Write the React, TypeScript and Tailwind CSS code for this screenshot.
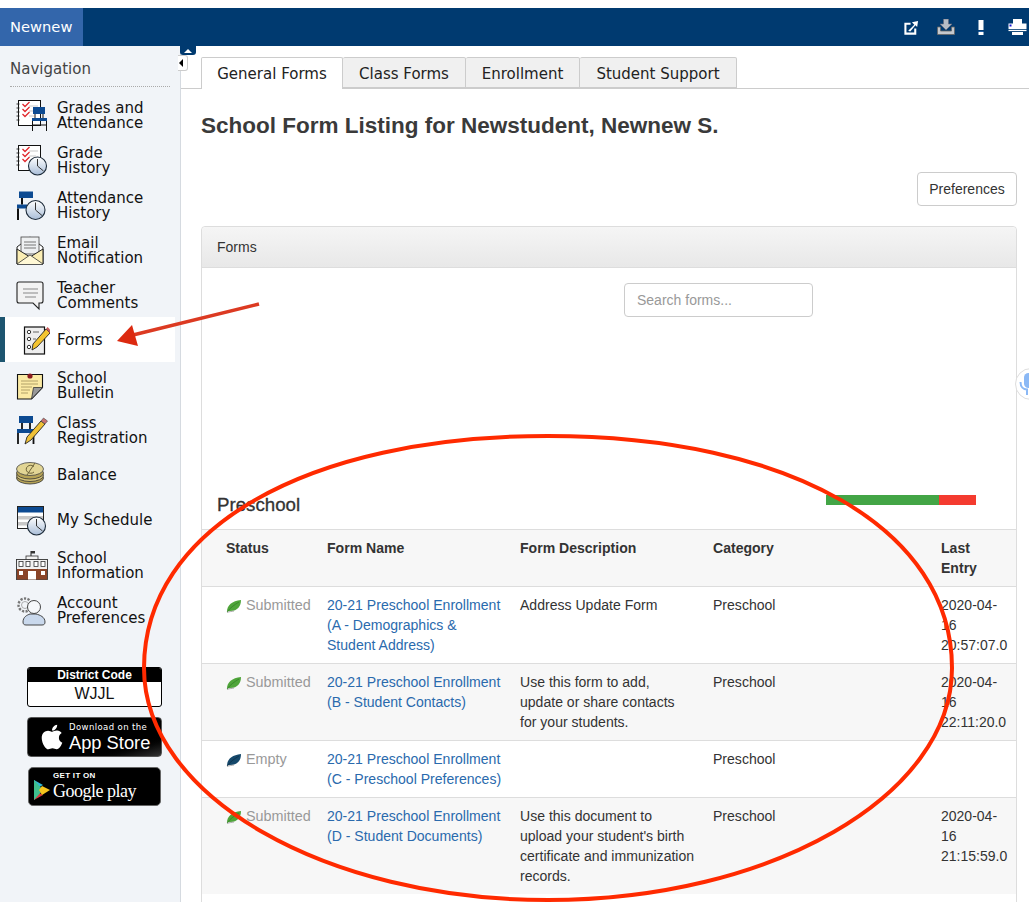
import { ReactNode } from "react";
import { FaApple } from "react-icons/fa";

const Clock = ({ x, y, r = 7.5 }: { x: number; y: number; r?: number }) => (
  <g>
    <defs>
      <linearGradient id="clockFill" x1="0" y1="0" x2="0" y2="1">
        <stop offset="0" stopColor="#ffffff" />
        <stop offset="1" stopColor="#a9bdd8" />
      </linearGradient>
    </defs>
    <circle cx={x} cy={y} r={r} fill="url(#clockFill)" stroke="#1d2b3a" strokeWidth="1.1" />
    <path d={`M${x} ${y - r + 2}V${y}L${x + r - 3} ${y + r - 4}`} fill="none" stroke="#333" strokeWidth="1" />
  </g>
);

const Notebook = () => (
  <g>
    <rect x="2.500" y="1.500" width="22" height="25" fill="#fff" stroke="#111" strokeWidth="1" />
    <path d="M0.500 5h3M0.500 9h3M0.500 13h3M0.500 17h3M0.500 21h3" stroke="#222" strokeWidth="0.9" />
    <path d="M13 7h9M13 12h7M13 17h5" stroke="#bbb" strokeWidth="0.8" />
    {[5, 10, 15].map((y) => (
      <path key={y} d={`M6.500 ${y}l2.500 2.500 4.500-4.500`} fill="none" stroke="#e0262b" strokeWidth="1.300" />
    ))}
  </g>
);

const GradesIcon = () => (
  <>
    <Notebook />
    <rect x="17" y="8" width="12" height="7" fill="#0c4a92" />
    <rect x="16" y="19" width="15" height="3" fill="#0c4a92" />
    <path d="M19 15v4M27 15v4M16.500 22v10M30.500 22v10M17 26h13" fill="none" stroke="#111" strokeWidth="1" />
  </>
);

const GradeHistoryIcon = () => (
  <>
    <Notebook />
    <Clock x={21.500} y={22} r={9} />
  </>
);

const AttendanceIcon = () => (
  <>
    <rect x="3" y="2.500" width="14" height="6.500" fill="#0c4a92" />
    <rect x="1" y="15.500" width="10" height="4" fill="#0c4a92" />
    <path d="M2 19.500v11.500" stroke="#111" strokeWidth="2" />
    <path d="M6 9v6.500" stroke="#111" strokeWidth="2" />
    <Clock x={19.500} y={21} r={9.500} />
  </>
);

const EmailIcon = () => (
  <>
    <path d="M1 13L14 3h0l13 10v17H1z" fill="#fff" stroke="#222" strokeWidth="1" />
    <rect x="5" y="3" width="18" height="17" fill="#eef0f2" stroke="#444" strokeWidth="0.8" />
    <path d="M8 8h12M8 11h12M8 14h12" stroke="#777" strokeWidth="1" />
    <path d="M1 15l13 8 13-8v15H1z" fill="#fbeeb4" stroke="#222" strokeWidth="1" />
    <path d="M1 30l13-9 13 9" fill="#fff8d6" stroke="#333" strokeWidth="0.8" />
  </>
);

const CommentIcon = () => (
  <>
    <path d="M3 3h22a2 2 0 0 1 2 2v17a2 2 0 0 1-2 2h-2v6l-6-6H3a2 2 0 0 1-2-2V5a2 2 0 0 1 2-2z" fill="#f2f2f2" stroke="#222" strokeWidth="1.100" />
    <path d="M7 10h15M7 14h15M9 18h11" stroke="#888" strokeWidth="1" />
  </>
);

const FormsIcon = () => (
  <>
    <rect x="8.500" y="3" width="20" height="27" fill="#eee" stroke="#111" strokeWidth="1.200" />
    <circle cx="13" cy="8" r="1.700" fill="#fff" stroke="#333" />
    <circle cx="13" cy="15" r="1.700" fill="#fff" stroke="#333" />
    <circle cx="13" cy="23" r="1.700" fill="#fff" stroke="#333" />
    <path d="M17 8h6M17 15h3" stroke="#666" strokeWidth="1.200" />
    <path d="M16 26l1-6 13-15 4 4-13 14z" fill="#f4c430" stroke="#222" strokeWidth="0.9" />
    <path d="M30 5l1.500-2 3 3-.5 3z" fill="#c65b5b" />
  </>
);

const BulletinIcon = () => (
  <>
    <path d="M1.500 5.500h25v13l-11 11.500h-14z" fill="#fbeaa4" stroke="#111" strokeWidth="1.100" />
    <path d="M15.500 30l2-11.500h9z" fill="#999" stroke="#333" strokeWidth="0.8" />
    <circle cx="14" cy="7" r="2.600" fill="#8a1c22" />
    <path d="M5 12h17M5 15h17M5 18h11M5 21h9M5 24h7" stroke="#a89a63" strokeWidth="0.9" />
  </>
);

const RegistrationIcon = () => (
  <>
    <rect x="3" y="2" width="14" height="7" fill="#0c4a92" />
    <rect x="1" y="15" width="17" height="4" fill="#0c4a92" />
    <path d="M2 19v11M17.500 19v11M6 9v6M14 9v6" stroke="#111" strokeWidth="1.800" />
    <path d="M9 30l2-7 14-16 4 3-14 16z" fill="#f0c136" stroke="#222" strokeWidth="0.9" />
    <path d="M25 7l2.500-3 4 3-2.500 3z" fill="#c87070" stroke="#444" strokeWidth="0.6" />
  </>
);

const BalanceIcon = () => (
  <>
    <ellipse cx="14" cy="19" rx="13.500" ry="6" fill="#b5a256" stroke="#333" strokeWidth="0.8" />
    <ellipse cx="14" cy="16.500" rx="13.500" ry="6" fill="#d8c578" stroke="#333" strokeWidth="0.8" />
    <ellipse cx="14" cy="14" rx="13.500" ry="6" fill="#b5a256" stroke="#333" strokeWidth="0.8" />
    <ellipse cx="14" cy="10" rx="13.500" ry="6.500" fill="#e2d594" stroke="#444" strokeWidth="0.8" />
    <path d="M18 7.500a4.500 4 0 1 0 0 5.500M19 4l-8 12" fill="none" stroke="#6c6238" strokeWidth="1" />
  </>
);

const ScheduleIcon = () => (
  <>
    <rect x="1.500" y="2.500" width="26" height="22" fill="#fff" stroke="#222" strokeWidth="1" />
    <rect x="2" y="3" width="25" height="5.500" fill="#0c4a92" />
    <rect x="2" y="12" width="25" height="3.500" fill="#c8c8c8" />
    <rect x="2" y="18" width="25" height="3.500" fill="#c8c8c8" />
    <Clock x={20.500} y={22} r={9} />
  </>
);

const SchoolIcon = () => (
  <>
    <path d="M15 2v5" stroke="#222" strokeWidth="1" />
    <rect x="15" y="2" width="4" height="2.500" fill="#333" />
    <rect x="10" y="7" width="12" height="5" fill="#f2f2f2" stroke="#333" strokeWidth="0.8" />
    <rect x="0.500" y="10.500" width="31" height="20" fill="#f2f2f2" stroke="#333" strokeWidth="0.9" />
    <rect x="1" y="20" width="30" height="10.500" fill="#8a4428" />
    <rect x="3" y="12.500" width="4" height="5" fill="#fff" stroke="#333" strokeWidth="0.8" />
    <rect x="10" y="12.500" width="4" height="5" fill="#fff" stroke="#333" strokeWidth="0.8" />
    <rect x="18" y="12.500" width="4" height="5" fill="#fff" stroke="#333" strokeWidth="0.8" />
    <rect x="25" y="12.500" width="4" height="5" fill="#fff" stroke="#333" strokeWidth="0.8" />
    <rect x="3" y="22" width="4" height="4" fill="#fff" />
    <rect x="25" y="22" width="4" height="4" fill="#fff" />
    <rect x="12" y="22" width="8" height="8.500" fill="#fff" />
  </>
);

const AccountIcon = () => (
  <>
    <circle cx="9" cy="11" r="6.500" fill="none" stroke="#777" strokeWidth="2.400" strokeDasharray="2.200 1.400" />
    <circle cx="9" cy="11" r="3.500" fill="#f1f4f8" stroke="#999" strokeWidth="0.8" />
    <path d="M10 31c-2 0-3-1-3-3 0-5 4-7 7-8h6c4 1 9 3 9 8 0 2-1 3-3 3z" fill="#c9d8ec" stroke="#333" strokeWidth="0.9" />
    <circle cx="18" cy="13" r="6.500" fill="#f6f8fb" stroke="#333" strokeWidth="0.9" />
  </>
);

const navItems: { label: ReactNode; icon: ReactNode; active?: boolean }[] = [
  { label: <>Grades and<br />Attendance</>, icon: <GradesIcon /> },
  { label: <>Grade<br />History</>, icon: <GradeHistoryIcon /> },
  { label: <>Attendance<br />History</>, icon: <AttendanceIcon /> },
  { label: <>Email<br />Notification</>, icon: <EmailIcon /> },
  { label: <>Teacher<br />Comments</>, icon: <CommentIcon /> },
  { label: "Forms", icon: <FormsIcon />, active: true },
  { label: <>School<br />Bulletin</>, icon: <BulletinIcon /> },
  { label: <>Class<br />Registration</>, icon: <RegistrationIcon /> },
  { label: "Balance", icon: <BalanceIcon /> },
  { label: "My Schedule", icon: <ScheduleIcon /> },
  { label: <>School<br />Information</>, icon: <SchoolIcon /> },
  { label: <>Account<br />Preferences</>, icon: <AccountIcon /> },
];

const tabs = [
  { label: "General Forms", width: "w-[142px]" },
  { label: "Class Forms", width: "w-[123px]" },
  { label: "Enrollment", width: "w-[114px]" },
  { label: "Student Support", width: "w-[157px]" },
];

const rows = [
  {
    status: "Submitted",
    name: <>20-21 Preschool Enrollment<br />(A - Demographics &amp;<br />Student Address)</>,
    desc: "Address Update Form",
    entry: "2020-04-16 20:57:07.0",
  },
  {
    status: "Submitted",
    name: <>20-21 Preschool Enrollment<br />(B - Student Contacts)</>,
    desc: <>Use this form to add,<br />update or share contacts<br />for your students.</>,
    entry: "2020-04-16 22:11:20.0",
  },
  {
    status: "Empty",
    name: <>20-21 Preschool Enrollment<br />(C - Preschool Preferences)</>,
    desc: "",
    entry: "",
  },
  {
    status: "Submitted",
    name: <>20-21 Preschool Enrollment<br />(D - Student Documents)</>,
    desc: <>Use this document to<br />upload your student's birth<br />certificate and immunization<br />records.</>,
    entry: "2020-04-16 21:15:59.0",
  },
];

const Leaf = ({ empty }: { empty: boolean }) => (
  <svg viewBox="0 0 16 14" className="w-4 h-[14px] shrink-0 mt-[4px]">
    <path d="M1 13C1 6 6 2 15 1c0 6-3 11-11 11-1 0-2 0-3 1z" fill={empty ? "#15486b" : "#4fa53a"} />
    <path d="M1 13C4 9 8 6 13 3" fill="none" stroke={empty ? "#0b2c44" : "#2f7d25"} strokeWidth="0.7" />
    <path d="M1 13.500c2-1 5-1 7-1.500" fill="none" stroke="#888" strokeWidth="0.7" />
  </svg>
);

const HeaderIcons = () => (
  <div className="flex items-center ml-auto">
    <svg viewBox="0 0 16 16" className="w-[15px] h-[15px] mr-[18px]">
      <path d="M7 4H1.500v10.500H12V9" fill="none" stroke="#fff" strokeWidth="2.200" />
      <path d="M4.500 11.500L11 5 8.500 2.500 15 1l-1 6.500-1.800-1.800-5.500 6.500z" fill="#fff" />
    </svg>
    <svg viewBox="0 0 18 16" className="w-[18px] h-4 mr-[23px]">
      <path d="M6.500 0h5v5H15l-6 6-6-6h3.500z" fill="#b5bcc6" stroke="#667" strokeWidth="0.6" />
      <path d="M0.500 8v7.500h17V8h-3v4h-11V8z" fill="#c4c8ce" stroke="#666" strokeWidth="0.8" />
    </svg>
    <svg viewBox="0 0 6 15" className="w-[6px] h-[15px] mr-[24px]">
      <rect x="0.500" width="5" height="10" fill="#fff" />
      <rect x="0.500" y="11" width="5" height="1" fill="#1f5fa8" />
      <rect x="0.500" y="12" width="5" height="3" fill="#fff" />
    </svg>
    <svg viewBox="0 0 19 16" className="w-[19px] h-4 mr-[2px]">
      <rect x="5" y="0" width="9" height="5" fill="#fff" />
      <path d="M0.500 4.500h18V10H0.500z" fill="#fff" />
      <rect x="1.500" y="5.500" width="2" height="2" fill="#1414d8" />
      <rect x="0.500" y="10.800" width="18" height="1.300" fill="#fff" />
      <rect x="4" y="13" width="11" height="3" fill="#fff" />
    </svg>
  </div>
);

const Sidebar = () => (
  <aside className="w-[181px] shrink-0 bg-[#f1f4f8] border-r border-[#d5dae0] font-['DejaVu_Sans',sans-serif]">
    <div className="mx-[10px] h-[41px] pt-[14px] border-b border-dotted border-[#aaaaaa] text-[15px] leading-[18px] text-[#444444]">
      Navigation
    </div>
    <nav className="mt-[5px]">
      {navItems.map((item, i) => (
        <div
          key={i}
          className={
            item.active
              ? "h-[45px] w-[175px] flex items-center pl-[11px] gap-[7px] bg-white border-l-[5px] border-[#1d5570]"
              : "h-[45px] flex items-center pl-[16px] gap-[7px]"
          }
        >
          <svg viewBox="0 0 34 32" className="w-[34px] h-8 shrink-0">
            {item.icon}
          </svg>
          <span className="block pt-[2px] text-[15px] leading-[15px] text-[#111111]">{item.label}</span>
        </div>
      ))}
    </nav>
    <div className="ml-[27px] mt-[35px] w-[135px] flex flex-col font-['Liberation_Sans',sans-serif]">
      <div className="h-10 rounded-[3px] border border-black bg-white overflow-hidden">
        <div className="h-[14px] bg-black text-white text-[12px] leading-[14px] font-bold text-center">District Code</div>
        <div className="text-[16px] leading-[24px] text-center text-[#111111]">WJJL</div>
      </div>
      <div className="mt-[10px] h-10 rounded-[4px] bg-gradient-to-br from-black from-70% to-[#333333] border border-[#555555] flex items-center text-white overflow-hidden">
        <FaApple className="w-[28px] h-[28px] ml-[10px] mr-[3px] shrink-0" />
        <div>
          <div className="text-[8.500px] leading-[10px] tracking-[0.4px] font-['DejaVu_Sans',sans-serif] whitespace-nowrap">Download on the</div>
          <div className="text-[18.300px] leading-[21px] whitespace-nowrap">App Store</div>
        </div>
      </div>
      <div className="mt-[10px] ml-[1px] w-[133px] h-[39px] rounded-[5px] bg-black border border-[#666666] flex items-center text-white">
        <svg viewBox="0 0 18 22" className="w-[18px] h-[22px] ml-[4px] mt-[6px] shrink-0">
          <path d="M1 1v10h0l9-5z" fill="#31b7d6" />
          <path d="M1 21V11l9 5z" fill="#d73b3f" />
          <path d="M1 1l9 10-9 10z" fill="#3fbf8e" />
          <path d="M9 7l8 4-8 5-3-5z" fill="#f6c51e" />
        </svg>
        <div className="ml-[2px]">
          <div className="text-[8px] leading-[10px] tracking-[0.3px] font-bold">GET IT ON</div>
          <div className="text-[18px] leading-[21px] whitespace-nowrap tracking-[-0.5px] font-['Liberation_Serif',serif]">Google play</div>
        </div>
      </div>
    </div>
  </aside>
);

const FormsTable = () => (
  <table className="w-full table-fixed border-collapse text-[14.050px] leading-5 text-[#333333]">
    <colgroup>
      <col className="w-[117px]" />
      <col className="w-[193px]" />
      <col className="w-[193px]" />
      <col className="w-[228px]" />
      <col />
    </colgroup>
    <thead>
      <tr className="bg-[#f7f7f7] border-t border-[#dddddd]">
        <th className="pl-6 pr-2 py-2 text-left align-top font-bold">Status</th>
        <th className="px-2 py-2 text-left align-top font-bold">Form Name</th>
        <th className="px-2 py-2 text-left align-top font-bold">Form Description</th>
        <th className="px-2 py-2 text-left align-top font-bold">Category</th>
        <th className="px-2 py-2 text-left align-top font-bold">Last Entry</th>
      </tr>
    </thead>
    <tbody>
      {rows.map((row, i) => (
        <tr key={i} className={i % 2 === 0 ? "border-t border-[#dddddd] bg-white" : "border-t border-[#dddddd] bg-[#f7f7f7]"}>
          <td className="pl-6 pr-0 py-2 align-top">
            <div className="flex gap-[4px] text-[14.400px] text-[#999999]">
              <Leaf empty={row.status === "Empty"} />
              <span>{row.status}</span>
            </div>
          </td>
          <td className="px-2 py-2 align-top text-[#2a6aad]">{row.name}</td>
          <td className="px-2 py-2 align-top whitespace-nowrap">{row.desc}</td>
          <td className="px-2 py-2 align-top">Preschool</td>
          <td className="px-2 py-2 align-top text-[14px] break-words">{row.entry}</td>
        </tr>
      ))}
    </tbody>
  </table>
);

export default function App() {
  return (
    <div className="relative w-[1029px] h-[902px] overflow-hidden bg-white font-['Liberation_Sans',sans-serif]">
      <div className="h-2" />
      <header className="h-[38px] bg-[#003a70] flex items-center">
        <div className="w-[83px] h-full bg-[#3366ab] text-white font-['DejaVu_Sans',sans-serif] text-[14.700px] leading-[38px] pl-[10px]">
          Newnew
        </div>
        <HeaderIcons />
      </header>

      <div className="flex h-[856px]">
        <Sidebar />
        <main className="flex-1 min-w-0">
          <div className="h-[43px] pt-[11px] pl-[20px] flex border-b border-[#cccccc] font-['DejaVu_Sans',sans-serif] text-[15px] text-[#222222]">
            {tabs.map((tab, i) => (
              <div
                key={tab.label}
                className={
                  i === 0
                    ? `h-[32px] ${tab.width} text-center leading-[33px] bg-white border border-b-0 border-[#cccccc] rounded-t-[2px] whitespace-nowrap`
                    : `h-[31px] ${tab.width} text-center leading-[32px] bg-[#f0f0f0] border border-l-0 border-[#cccccc] rounded-t-[2px] whitespace-nowrap`
                }
              >
                {tab.label}
              </div>
            ))}
          </div>

          <div className="pl-[20px] pr-[12px]">
            <h1 className="mt-[24px] text-[22.500px] leading-[26px] font-bold text-[#3a3a3a] whitespace-nowrap">
              School Form Listing for Newstudent, Newnew S.
            </h1>
            <div className="mt-[33px] flex justify-end">
              <button className="w-[100px] h-[34px] bg-white border border-[#cccccc] rounded-[4px] text-[14px] text-[#333333]">
                Preferences
              </button>
            </div>

            <section className="mt-[20px] border border-[#dddddd] rounded-t-[4px] h-[700px]">
              <div className="h-[41px] px-[15px] leading-[41px] text-[14px] text-[#333333] border-b border-[#dddddd] bg-gradient-to-b from-[#f5f5f5] to-[#e8e8e8] rounded-t-[4px]">
                Forms
              </div>
              <div className="pt-[15px] pl-[422px]">
                <input
                  placeholder="Search forms..."
                  className="w-[189px] h-[34px] px-3 border border-[#cccccc] rounded-[4px] text-[14px] placeholder:text-[#999999] outline-none"
                />
              </div>
              <div className="mt-[164px] h-[48px] pl-[15px] pr-[40px] flex justify-between">
                <h2 className="text-[18.700px] leading-[48px] text-[#333333] [-webkit-text-stroke:0.3px_#333333]">Preschool</h2>
                <div className="w-[150px] h-[10px] mt-[14px] flex">
                  <div className="w-[113px] bg-[#43a546]" />
                  <div className="flex-1 bg-[#f43b2f]" />
                </div>
              </div>
              <FormsTable />
            </section>
          </div>
        </main>
      </div>

      {/* sidebar collapse handles */}
      <div className="absolute left-[180px] top-[46px] w-[16px] h-[9px] bg-[#003a70] rounded-b-[3px] flex justify-center pt-[3px]">
        <div className="w-0 h-0 border-x-[4px] border-x-transparent border-b-[4px] border-b-white" />
      </div>
      <div className="absolute left-[178px] top-[55px] w-[10px] h-[16px] bg-white border border-l-0 border-[#cccccc] rounded-r-[3px] flex items-center pl-[1px]">
        <div className="w-0 h-0 border-y-[4px] border-y-transparent border-r-[4px] border-r-black" />
      </div>

      {/* chat widget, cut off by the window edge */}
      <div className="absolute left-[1015px] top-[368px] w-8 h-8 rounded-full bg-white border border-[#dddddd] flex items-center pl-[3px]">
        <svg viewBox="0 0 14 22" className="w-[14px] h-[22px] shrink-0">
          <rect x="5" y="0" width="9" height="15" rx="4.500" fill="#8ab8f5" />
          <path d="M1.500 9c0 5 3 7.500 6.500 7.500V22" fill="none" stroke="#8ab8f5" strokeWidth="2" />
        </svg>
      </div>

      {/* red annotations */}
      <svg viewBox="0 0 1029 902" className="absolute inset-0 w-[1029px] h-[902px] pointer-events-none">
        <path
          d="M144 668C144 529 306 436 548 436C790 436 952 529 952 668C952 796 771 900 548 900C325 900 144 796 144 668Z"
          fill="none"
          stroke="#ff2a00"
          strokeWidth="4"
        />
        <path d="M259 304L133 335" fill="none" stroke="#dc3a22" strokeWidth="3.500" />
        <path d="M117 341L132 325L138 346z" fill="#dc2a10" />
      </svg>
    </div>
  );
}
